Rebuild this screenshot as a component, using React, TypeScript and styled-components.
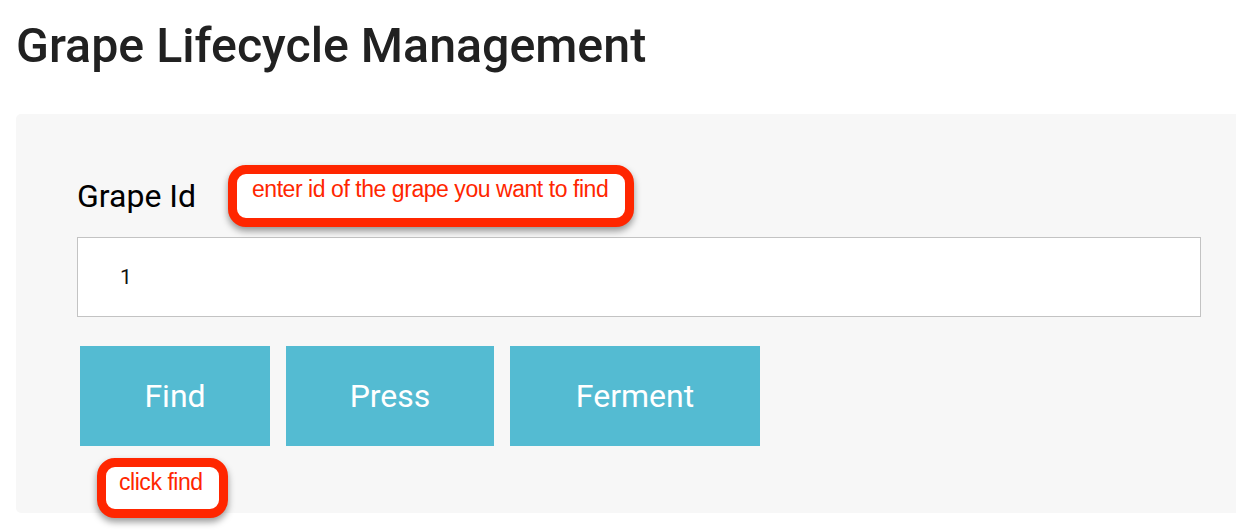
import React from "react";
import styled, { createGlobalStyle } from "styled-components";

const Global = createGlobalStyle`
  html, body { margin: 0; padding: 0; background: #ffffff; }
  body { font-family: Roboto, "Noto Sans", sans-serif; color: #212121; overflow-x: hidden; }
`;

const Page = styled.div`
  min-height: 530px;
  box-sizing: border-box;
  padding: 18px 0 0 16px;
  display: flex;
  flex-direction: column;
`;

const Title = styled.h1`
  margin: 0 0 40px 0;
  font-family: Roboto, sans-serif;
  font-weight: 500;
  font-size: 48.3px;
  line-height: 56px;
  color: #212121;
`;

const Panel = styled.section`
  position: relative;
  background: #f7f7f7;
  border-radius: 5px 0 0 5px;
  height: 399px;
  box-sizing: border-box;
  padding: 64px 35px 0 61px;
  display: flex;
  flex-direction: column;
`;

const Label = styled.label`
  font-family: Roboto, sans-serif;
  font-size: 32px;
  line-height: 37px;
  color: #000000;
  margin-bottom: 22px;
`;

const Input = styled.input`
  box-sizing: border-box;
  width: 100%;
  height: 80px;
  border: 1px solid #c3c3c3;
  background: #ffffff;
  padding: 0 0 0 42px;
  font-family: Roboto, sans-serif;
  font-size: 21px;
  color: #111111;
  outline: none;
  margin: 0 0 29px 0;
`;

const ButtonRow = styled.div`
  display: flex;
  gap: 16px;
  padding-left: 3px;
`;

const ActionButton = styled.button<{ $w: number }>`
  width: ${(p) => p.$w}px;
  height: 100px;
  border: none;
  border-radius: 0;
  background: #54bbd2;
  color: #ffffff;
  font-family: Roboto, sans-serif;
  font-size: 32px;
  padding: 0;
  cursor: pointer;
`;

const Callout = styled.div<{ $left: number; $top: number; $w: number; $h: number }>`
  position: absolute;
  left: ${(p) => p.$left}px;
  top: ${(p) => p.$top}px;
  width: ${(p) => p.$w}px;
  height: ${(p) => p.$h}px;
  box-sizing: border-box;
  border: 9px solid #ff2600;
  border-radius: 18px;
  background: #ffffff;
  box-shadow: 0 4px 7px rgba(0, 0, 0, 0.4);
  padding: 3px 0 0 ${(p) => (p.$w > 200 ? 15 : 13)}px;
  font-family: "Liberation Sans", Arial, sans-serif;
  font-size: 23px;
  letter-spacing: -0.45px;
  line-height: 24px;
  color: #ff2600;
  white-space: nowrap;
`;

export default function App() {
  return (
    <>
      <Global />
      <Page>
        <Title>Grape Lifecycle Management</Title>
        <Panel>
          <Label htmlFor="grape-id">Grape Id</Label>
          <Input id="grape-id" defaultValue="1" />
          <ButtonRow>
            <ActionButton $w={190}>Find</ActionButton>
            <ActionButton $w={208}>Press</ActionButton>
            <ActionButton $w={250}>Ferment</ActionButton>
          </ButtonRow>
          <Callout $left={212} $top={51} $w={406} $h={62}>
            enter id of the grape you want to find
          </Callout>
          <Callout $left={81} $top={344} $w={131} $h={60}>
            click find
          </Callout>
        </Panel>
      </Page>
    </>
  );
}
